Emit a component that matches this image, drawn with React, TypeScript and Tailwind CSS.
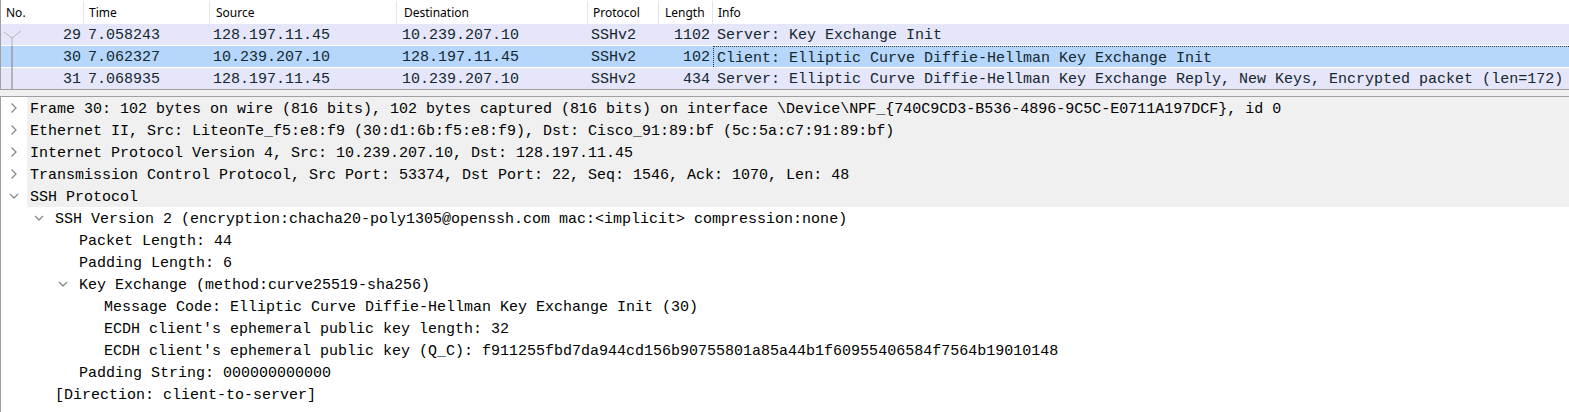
import React from "react"

const mono = "font-['Liberation_Mono','DejaVu_Sans_Mono',monospace] text-[15px]"
const ui = "font-['Noto_Sans','Liberation_Sans',sans-serif] text-[12px]"

const packets = [
  { no: "29", time: "7.058243", src: "128.197.11.45", dst: "10.239.207.10", proto: "SSHv2", len: "1102", info: "Server: Key Exchange Init", selected: false },
  { no: "30", time: "7.062327", src: "10.239.207.10", dst: "128.197.11.45", proto: "SSHv2", len: "102", info: "Client: Elliptic Curve Diffie-Hellman Key Exchange Init", selected: true },
  { no: "31", time: "7.068935", src: "128.197.11.45", dst: "10.239.207.10", proto: "SSHv2", len: "434", info: "Server: Elliptic Curve Diffie-Hellman Key Exchange Reply, New Keys, Encrypted packet (len=172)", selected: false },
]

type Node = { lvl: 0 | 1 | 2 | 3; arrow?: "right" | "down"; text: string }

const tree: Node[] = [
  { lvl: 0, arrow: "right", text: "Frame 30: 102 bytes on wire (816 bits), 102 bytes captured (816 bits) on interface \\Device\\NPF_{740C9CD3-B536-4896-9C5C-E0711A197DCF}, id 0" },
  { lvl: 0, arrow: "right", text: "Ethernet II, Src: LiteonTe_f5:e8:f9 (30:d1:6b:f5:e8:f9), Dst: Cisco_91:89:bf (5c:5a:c7:91:89:bf)" },
  { lvl: 0, arrow: "right", text: "Internet Protocol Version 4, Src: 10.239.207.10, Dst: 128.197.11.45" },
  { lvl: 0, arrow: "right", text: "Transmission Control Protocol, Src Port: 53374, Dst Port: 22, Seq: 1546, Ack: 1070, Len: 48" },
  { lvl: 0, arrow: "down", text: "SSH Protocol" },
  { lvl: 1, arrow: "down", text: "SSH Version 2 (encryption:chacha20-poly1305@openssh.com mac:<implicit> compression:none)" },
  { lvl: 2, text: "Packet Length: 44" },
  { lvl: 2, text: "Padding Length: 6" },
  { lvl: 2, arrow: "down", text: "Key Exchange (method:curve25519-sha256)" },
  { lvl: 3, text: "Message Code: Elliptic Curve Diffie-Hellman Key Exchange Init (30)" },
  { lvl: 3, text: "ECDH client's ephemeral public key length: 32" },
  { lvl: 3, text: "ECDH client's ephemeral public key (Q_C): f911255fbd7da944cd156b90755801a85a44b1f60955406584f7564b19010148" },
  { lvl: 2, text: "Padding String: 000000000000" },
  { lvl: 1, text: "[Direction: client-to-server]" },
]

const indent = ["w-[26px]", "w-[51px]", "w-[75px]", "w-[100px]"]

function Chevron({ dir }: { dir: "right" | "down" }) {
  return (
    <svg width="10" height="12" viewBox="0 0 10 12" fill="none" stroke="#8a8a8a" strokeWidth="1.3">
      {dir === "right" ? <polyline points="2.5,1.5 7,6 2.5,10.5" /> : <polyline points="1,4 5,8 9,4" />}
    </svg>
  )
}

// related-packet marker in the No. column
function Related({ first, last }: { first: boolean; last: boolean }) {
  return (
    <svg className="absolute left-0 top-0" width="24" height="22" viewBox="0 0 24 22" fill="none">
      {first ? <polyline points="3,8 11,14 20,7" stroke="#b4b4b4" strokeWidth="1" /> : null}
      <line x1="11" y1={first ? 14 : 0} x2="11" y2={last ? 21 : 22} stroke={first ? "#b4b4b4" : "#808080"} strokeWidth="1" />
    </svg>
  )
}

export default function App() {
  return (
    <div className="w-[1569px] h-[412px] bg-[#f0f0f0] flex flex-col overflow-hidden">
      {/* Packet list */}
      <div className="border-l border-b border-[#a0a0a0] bg-white">
        <div className={`flex h-[24px] items-center pt-[1px] text-black ${ui}`}>
          <div className="w-[83px] h-full flex items-center pl-[5px] border-r border-[#e5e5e5]">No.</div>
          <div className="w-[126px] h-full flex items-center pl-[5px] border-r border-[#e5e5e5]">Time</div>
          <div className="w-[187px] h-full flex items-center pl-[6px] border-r border-[#e5e5e5]">Source</div>
          <div className="w-[191px] h-full flex items-center pl-[7px] border-r border-[#e5e5e5]">Destination</div>
          <div className="w-[71px] h-full flex items-center pl-[5px] border-r border-[#e5e5e5]">Protocol</div>
          <div className="w-[54px] h-full flex items-center pl-[6px] border-r border-[#e5e5e5]">Length</div>
          <div className="flex-1 h-full flex items-center pl-[5px]">Info</div>
        </div>
        {packets.map((p, i) => (
          <div
            key={p.no}
            className={`flex items-center whitespace-pre text-[#12272e] ${mono} ${
              p.selected ? "bg-[#b7d6fb]" : "bg-[#e6e6fa]"
            } ${i < packets.length - 1 ? "h-[22px] border-b border-white" : "h-[21px]"}`}
          >
            <div className="relative w-[83px] h-full flex items-center justify-end pr-[3px]">
              <Related first={i === 0} last={i === packets.length - 1} />
              <span className="translate-y-[2px]">{p.no}</span>
            </div>
            <div className="w-[126px] pl-[4px] translate-y-[2px]">{p.time}</div>
            <div className="w-[187px] pl-[3px] translate-y-[2px]">{p.src}</div>
            <div className="w-[191px] pl-[5px] translate-y-[2px]">{p.dst}</div>
            <div className="w-[71px] pl-[3px] translate-y-[2px]">{p.proto}</div>
            <div className="w-[54px] text-right pr-[3px] translate-y-[2px]">{p.len}</div>
            <div
              className={`flex-1 h-full flex items-center ${
                p.selected ? "pl-[3px] border-t border-l border-dotted border-[#333]" : "pl-[4px]"
              }`}
            >
              <span className="translate-y-[2px]">{p.info}</span>
            </div>
          </div>
        ))}
      </div>

      {/* Splitter */}
      <div className="h-[6px] shrink-0" />

      {/* Packet details */}
      <div className="flex-1 bg-white border-l border-t border-[#a0a0a0] text-black">
        {tree.map((n, i) => (
          <div key={i} className={`flex h-[22px] items-center whitespace-pre ${mono}`}>
            <div className={`${indent[n.lvl]} shrink-0 h-full flex items-center justify-end pr-[8px]`}>
              {n.arrow ? <Chevron dir={n.arrow} /> : null}
            </div>
            <div className={`flex-1 h-full flex items-center pl-[3px] ${n.lvl === 0 ? "bg-[#f0f0f0]" : ""}`}>
              <span className="translate-y-[2px]">{n.text}</span>
            </div>
          </div>
        ))}
      </div>
    </div>
  )
}
